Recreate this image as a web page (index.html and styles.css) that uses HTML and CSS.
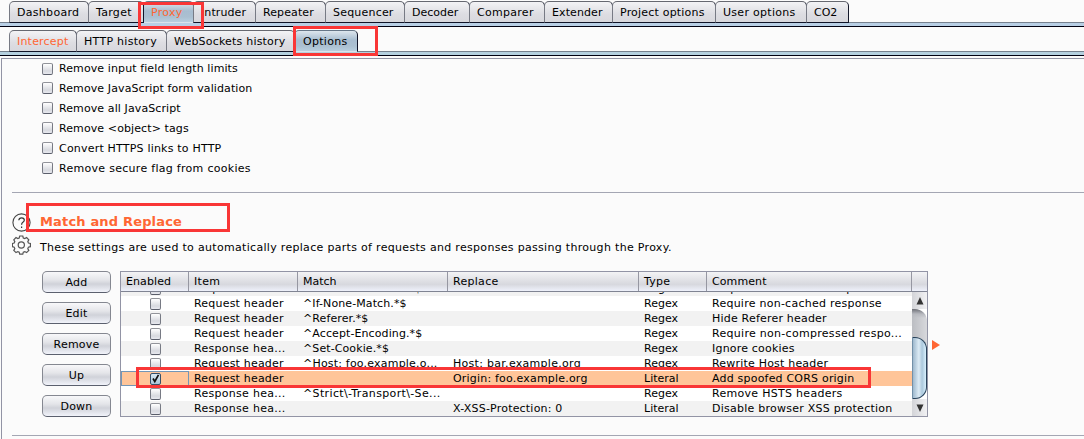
FILE: index.html
```html
<!DOCTYPE html>
<html lang="en">
<head>
<meta charset="utf-8">
<title>Proxy options</title>
<link rel="stylesheet" href="styles.css">
</head>
<body>
<div class="window">
  <nav class="tabs main-tabs">
    <span class="tab t-dashboard">Dashboard</span><span class="tab t-target">Target</span><span class="tab t-proxy selected hot">Proxy</span><span class="tab t-intruder s1">Intruder</span><span class="tab t-repeater s1">Repeater</span><span class="tab t-sequencer">Sequencer</span><span class="tab t-decoder s0">Decoder</span><span class="tab t-comparer s3">Comparer</span><span class="tab t-extender s1">Extender</span><span class="tab t-project">Project options</span><span class="tab t-user s3">User options</span><span class="tab t-co2 s0">CO2</span>
  </nav>
  <nav class="tabs sub-tabs">
    <span class="tab t-intercept hot">Intercept</span><span class="tab t-http s3">HTTP history</span><span class="tab t-ws">WebSockets history</span><span class="tab t-options selected s3">Options</span>
  </nav>
  <main class="panel">
    <ul class="checks">
      <li><i class="box"></i><span class="s1">Remove input field length limits</span></li>
      <li><i class="box"></i><span class="s1">Remove JavaScript form validation</span></li>
      <li><i class="box"></i><span class="s1">Remove all JavaScript</span></li>
      <li><i class="box"></i><span class="s1">Remove &lt;object&gt; tags</span></li>
      <li><i class="box"></i><span>Convert HTTPS links to HTTP</span></li>
      <li><i class="box"></i><span class="s3">Remove secure flag from cookies</span></li>
    </ul>
    <section class="match">
      <div class="title-row">
        <svg class="icon" width="20" height="20" viewBox="0 0 20 20"><circle cx="9.500" cy="9.500" r="8.600" fill="none" stroke="#444" stroke-width="1.100"/><path d="M6.800 7.200Q7 4.800 9.600 4.800Q12.300 4.800 12.300 7.100Q12.300 8.400 10.900 9.300Q9.600 10.100 9.600 11.700M9.600 13.400V15" fill="none" stroke="#333" stroke-width="1.200"/></svg>
        <h2>Match and Replace</h2>
      </div>
      <div class="desc-row">
        <svg class="icon" width="20" height="20" viewBox="0 0 20 20"><path d="M7.700 1h3.100l.5 2 1.500.6 1.800-1 2.200 2.200-1 1.800.6 1.400 2 .5v3.200l-2 .5-.6 1.400 1 1.800-2.200 2.200-1.800-1-1.500.6-.5 1.900H7.700l-.5-1.900-1.400-.6-1.800 1-2.200-2.200 1-1.800-.6-1.400-1.800-.5V8.500l1.800-.5.6-1.400-1-1.800L4 2.600l1.800 1L7.200 3z" fill="none" stroke="#555" stroke-width="1.200"/><circle cx="9.300" cy="10" r="3.100" fill="none" stroke="#555" stroke-width="1.200"/></svg>
        <p>These settings are used to automatically replace parts of requests and responses passing through the Proxy.</p>
      </div>
      <div class="rules">
        <div class="buttons">
          <button>Add</button><button>Edit</button><button>Remove</button><button>Up</button><button>Down</button>
        </div>
        <div class="table">
          <div class="row head"><span class="s1">Enabled</span><span class="s3">Item</span><span class="s0">Match</span><span class="s3">Replace</span><span class="s3">Type</span><span class="s1">Comment</span><span></span></div>
          <div class="viewport">
            <div class="body">
              <div class="row alt"><span><i class="box"></i></span><span>Request header</span><span class="s1">^If-Modified-Since.*$</span><span></span><span class="s0">Regex</span><span>Require non-cached response</span></div>
              <div class="row"><span><i class="box"></i></span><span>Request header</span><span class="s1">^If-None-Match.*$</span><span></span><span class="s0">Regex</span><span class="s25">Require non-cached response</span></div>
              <div class="row alt"><span><i class="box"></i></span><span>Request header</span><span class="s1">^Referer.*$</span><span></span><span class="s0">Regex</span><span>Hide Referer header</span></div>
              <div class="row"><span><i class="box"></i></span><span>Request header</span><span class="s1">^Accept-Encoding.*$</span><span></span><span class="s0">Regex</span><span class="s3">Require non-compressed respo...</span></div>
              <div class="row alt"><span><i class="box"></i></span><span class="s3">Response hea...</span><span class="s1">^Set-Cookie.*$</span><span></span><span class="s0">Regex</span><span>Ignore cookies</span></div>
              <div class="row"><span><i class="box"></i></span><span>Request header</span><span>^Host: foo.example.o...</span><span class="s3">Host: bar.example.org</span><span class="s0">Regex</span><span>Rewrite Host header</span></div>
              <div class="row picked"><span class="focus"><i class="box on"><svg width="11" height="12" viewBox="0 0 11 12"><path d="M3 5.500L4.800 8.500L8.500 1.800" fill="none" stroke="#111" stroke-width="1.700"/></svg></i></span><span>Request header</span><span></span><span>Origin: foo.example.org</span><span class="s0">Literal</span><span>Add spoofed CORS origin</span></div>
              <div class="row"><span><i class="box"></i></span><span class="s3">Response hea...</span><span class="s35">^Strict\-Transport\-Se...</span><span></span><span class="s0">Regex</span><span class="s3">Remove HSTS headers</span></div>
              <div class="row alt"><span><i class="box"></i></span><span class="s3">Response hea...</span><span></span><span>X-XSS-Protection: 0</span><span class="s0">Literal</span><span class="s25">Disable browser XSS protection</span></div>
            </div>
            <div class="scroll">
              <div class="arrow"><svg width="8" height="8" viewBox="0 0 8 8"><path d="M.5 7.500L4 0l3.500 7.500z" fill="#333"/></svg></div>
              <div class="well"><div class="thumb"></div></div>
              <div class="arrow"><svg width="8" height="8" viewBox="0 0 8 8"><path d="M.5 .5L4 8l3.500-7.500z" fill="#333"/></svg></div>
            </div>
          </div>
        </div>
        <svg class="expand" width="8" height="10" viewBox="0 0 8 10"><path d="M0 0l8 5-8 5z" fill="#ff6633"/></svg>
      </div>
    </section>
  </main>
  <div class="mark m-proxy"></div>
  <div class="mark m-options"></div>
  <div class="mark m-title"></div>
  <div class="mark m-row"></div>
</div>
</body>
</html>
```
FILE: styles.css
```css
* { box-sizing: border-box; }
body { margin: 0; background: #fbfbfb; color: #000; font: 11px/15px "DejaVu Sans", sans-serif; letter-spacing: .2px; }
.s0 { letter-spacing: 0; }
.s1 { letter-spacing: .1px; }
.s25 { letter-spacing: .25px; }
.s3 { letter-spacing: .29px; }
.s35 { letter-spacing: .36px; }
.window { position: relative; width: 1084px; height: 439px; overflow: hidden; white-space: nowrap; }
.tabs { display: flex; padding-left: 9px; }
.main-tabs { height: 27px; padding-top: 1px; background: linear-gradient(#fbfbfb 22px, #76818e 22px, #76818e 23px, #b8cfe5 23px, #b8cfe5 26px, #000010 26px); }
.sub-tabs { height: 29px; padding-top: 3px; background: linear-gradient(#fbfbfb 24px, #76818e 24px, #76818e 25px, #b4d0df 25px, #b4d0df 28px, #000010 28px); }
.tab { height: 22px; border: 1px solid #666870; border-left-color: #777a84; border-right-color: #15192b; border-bottom-color: #101428; border-radius: 5px 5px 0 0; background: linear-gradient(#f3f3f5, #dddde2 60%, #d8d8dd); padding: 3px 0 0 7px; margin-right: -1px; }
.tab.selected { background: linear-gradient(#dde6ed, #a8bdd0 45%, #abc0d1 75%, #b8cfe0); border-color: #667687 #101428 transparent #101428; }
.hot { color: #ff6633; }
.t-dashboard { width: 80px; letter-spacing: .3px; }
.t-target { width: 56px; letter-spacing: .3px; }
.t-proxy { width: 51px; letter-spacing: .3px; }
.t-intruder { width: 63px; }
.t-repeater { width: 71px; }
.t-sequencer { width: 80px; }
.t-decoder { width: 66px; }
.t-comparer { width: 76px; }
.t-extender { width: 69px; }
.t-project { width: 104px; }
.t-user { width: 92px; }
.t-co2 { width: 43px; }
.t-intercept { width: 68px; }
.t-http { width: 91px; }
.t-ws { width: 129px; }
.t-options { width: 64px; padding-left: 8px; }
.panel { margin: 2px 0 0 1px; height: 381px; border: solid #9294a5; border-width: 1px 0 0 1px; }
.checks { list-style: none; margin: 0 0 0 10px; padding: 0 0 14px 30px; border-bottom: 1px solid #a4a6b3; }
.checks li { display: flex; align-items: center; gap: 6px; height: 20px; }
.checks li:first-child { height: 19px; }
.box { display: block; width: 11px; height: 12px; border: 1px solid #767980; border-color: #92949a #777a84 #5a5e6b; border-radius: 2px; background: linear-gradient(#fff, #d7d9df 70%, #e8e9ef); }
.match { height: 243px; margin-left: 10px; border-bottom: 1px solid #a4a6b3; }
.title-row, .desc-row { display: flex; gap: 8px; }
.title-row { padding-top: 20px; height: 42px; }
.title-row h2 { margin: 0; color: #ff6633; font: bold 13px/18px "DejaVu Sans", sans-serif; letter-spacing: .17px; }
.desc-row { height: 36px; }
.desc-row p { margin: 5px 0 0; letter-spacing: .31px; }
.rules { display: flex; }
.buttons { display: flex; flex-direction: column; gap: 9px; width: 108px; padding-left: 30px; }
.buttons button { width: 69px; height: 22px; padding: 0; font: inherit; letter-spacing: inherit; border: 1px solid #858891; border-bottom: 1px solid #5b606e; border-radius: 5px; background: linear-gradient(#f8f8fa, #e4e5e9 40%, #d0d2d9 60%, #f1f3fa); }
.table { width: 808px; height: 146px; border: 1px solid #9294a5; background: #fff; }
.row { display: grid; grid-template-columns: 68px 109px 150px 191px 68px 205px 16px; height: 15px; }
.row span { padding-left: 5px; overflow: hidden; }
.head { height: 20px; line-height: 19px; border-bottom: 1px solid #808493; background: linear-gradient(#f3f3f5, #d7d8de 65%, #eef1fb); }
.head span { border-right: 1px solid #9697a2; }
.head span:last-child { border: 0; }
.viewport { display: flex; height: 124px; }
.body { width: 791px; height: 124px; overflow: hidden; display: flex; flex-direction: column; justify-content: flex-end; }
.body .row { flex: none; }
.body .row span:first-child { display: flex; justify-content: center; padding: 2px 0 0; }
.alt { background: #f2f2f2; }
.picked { background: #ffc599; }
.picked .focus { border: 1px solid #7396b6; }
.body .row .focus:first-child { padding-top: 1px; }
.on { background: linear-gradient(#d9e8f2, #a9c5d9); border-color: #35506a; }
.on svg { display: block; margin: -1px; }
.scroll { width: 15px; display: flex; flex-direction: column; }
.arrow { height: 17px; display: flex; align-items: center; justify-content: center; background: linear-gradient(90deg, #d3d4d8, #f1f1f3); }
.well { height: 90px; padding-top: 28px; background: linear-gradient(#6f7178, #b7b9bf 5px, transparent 9px), linear-gradient(90deg, #bbbdc2, #d7d8dc); border-radius: 0 12px 12px 0; }
.thumb { height: 62px; border: 1px solid #29435b; border-left-color: #7290a8; border-radius: 0 12px 12px 0; background: linear-gradient(90deg, #9eb8cd, #dcebf5 45%, #abc8dc 70%, #d8f0fd); }
.expand { margin: 69px 0 0 4px; }
.mark { position: absolute; border: 3px solid #f93636; }
.m-proxy { left: 138px; top: 2px; width: 66px; height: 27px; }
.m-options { left: 293px; top: 26px; width: 85px; height: 30px; }
.m-title { left: 26px; top: 203px; width: 204px; height: 29px; }
.m-row { left: 136px; top: 367px; width: 735px; height: 21px; }
```
